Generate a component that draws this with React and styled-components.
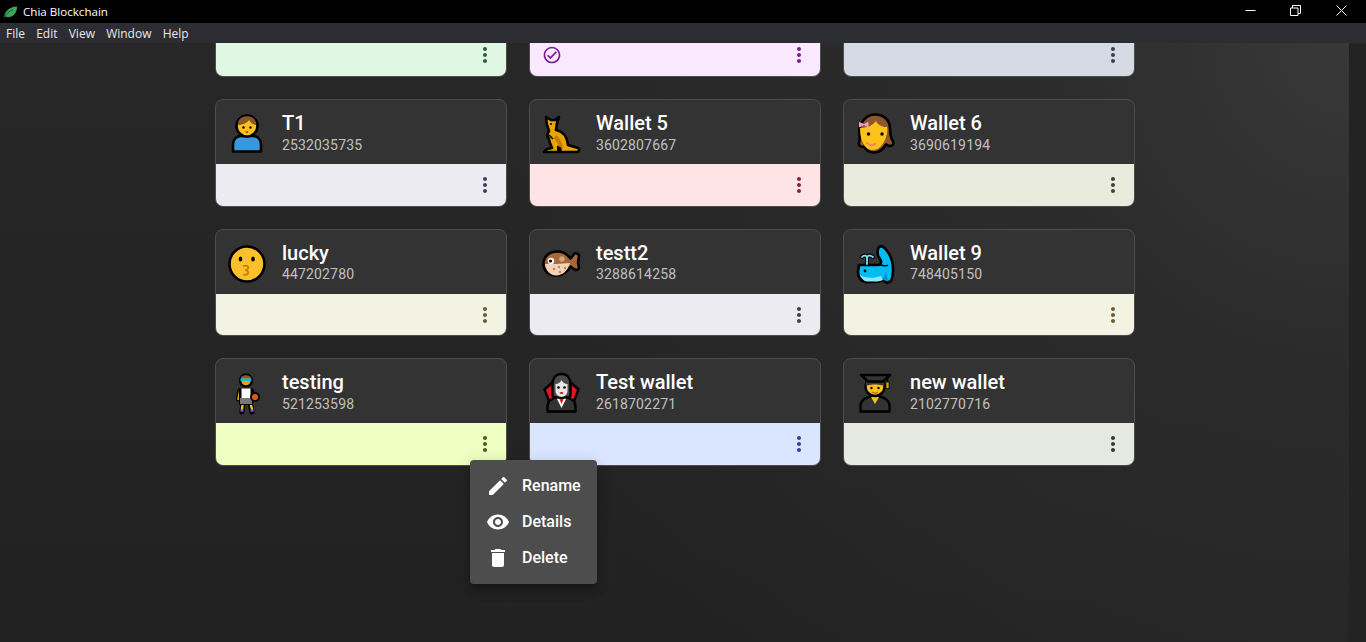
import React from "react";
import styled, { createGlobalStyle } from "styled-components";
import { MdEdit, MdVisibility, MdDelete, MdMoreVert, MdOutlineCheckCircle } from "react-icons/md";

const GlobalStyle = createGlobalStyle`
  html, body { margin: 0; padding: 0; height: 100%; background: #222; overflow: hidden; }
  #root { height: 100%; }
  * { box-sizing: border-box; }
`;

const Ink = "#000";
const Skin = "#fcc21b";

function PersonEmoji() {
  return (
    <svg width="42" height="42" viewBox="0 0 42 42">
      <path d="M7 39.500V32c0-5 4-8 8-8h12c4 0 8 3 8 8v7.500z" fill="#3a96dd" stroke={Ink} strokeWidth="2.600" strokeLinejoin="round" />
      <circle cx="21" cy="14" r="10.500" fill={Skin} stroke={Ink} strokeWidth="2.600" />
      <path d="M11.800 13c0-6 4-8.800 9.200-8.800s9.200 2.800 9.200 8.800c-3 0-6-2-7-5-2 3-7.400 5-11.400 5z" fill="#8e562e" />
      <circle cx="17.500" cy="15.500" r="1.200" fill={Ink} />
      <circle cx="24.500" cy="15.500" r="1.200" fill={Ink} />
      <ellipse cx="21" cy="20" rx="1.400" ry="1.100" fill="#9a5b00" />
    </svg>
  );
}

function KangarooEmoji() {
  return (
    <svg width="42" height="42" viewBox="0 0 42 42">
      <path
        d="M6 5l5 3h4l4-3-2 6-1 7c6 1 11 6 12 15l10 3c2 1 1 4-1 4H4l3-3 5-1c-1-3-3-6-3-9-2-2-2-5 0-8C7 14 6 9 6 5z"
        fill="#eaa300"
        stroke={Ink}
        strokeWidth="2.600"
        strokeLinejoin="round"
      />
      <circle cx="11" cy="12" r="1" fill={Ink} />
      <path d="M15 25c3 2 6 7 6 12" stroke="#c27c00" strokeWidth="4" fill="none" />
      <path d="M17 39.500v-6l4 2 1 4z" fill={Ink} />
      <path d="M9 23l4 4" stroke={Ink} strokeWidth="1.600" />
    </svg>
  );
}

function GirlEmoji() {
  return (
    <svg width="42" height="42" viewBox="0 0 42 42">
      <path
        d="M21 2.500c9 0 15 6 15 14 0 5 .5 9 3 13 1.500 3-2 5.500-5 4l-2-1c-3 5-7 8-12 8-4 0-8-2-10-6-3 1-6-1-5-4 1.500-3 .5-6 .5-9C4 12 12 2.500 21 2.500z"
        fill="#8e562e"
        stroke={Ink}
        strokeWidth="2.600"
        strokeLinejoin="round"
      />
      <path d="M6 16c6 0 12-2 16-7 2 4 6 6 11 6 1 3 0 8-2 13-3 6-7 10-12 10-7 0-13-7-13-22z" fill={Skin} />
      <circle cx="14.500" cy="22" r="1.700" fill={Ink} />
      <circle cx="28" cy="22" r="1.700" fill={Ink} />
      <path d="M13 31c3 2.500 6 2.500 8 1" stroke="#f08a5d" strokeWidth="2.200" fill="none" strokeLinecap="round" />
      <path d="M5.500 10.500l4.500 2-4.500 2.500zM14 10.500L10 12.500l4 2.500z" fill="#f39ac0" stroke="#f39ac0" strokeWidth="1" />
    </svg>
  );
}

function KissEmoji() {
  return (
    <svg width="42" height="42" viewBox="0 0 42 42">
      <circle cx="21" cy="22" r="17.500" fill="#fcc02d" stroke={Ink} strokeWidth="2.600" />
      <ellipse cx="14.500" cy="17" rx="1.800" ry="2.600" fill={Ink} />
      <ellipse cx="27" cy="17" rx="1.800" ry="2.600" fill={Ink} />
      <path d="M17 24c4-1 6 0 5 2.500-.5 1.200-2 1.500-3 1.500 1 0 2.500.5 3 1.800.8 2.400-2 3.500-5 2.700" stroke="#c97f00" strokeWidth="1.800" fill="none" />
    </svg>
  );
}

function FishEmoji() {
  return (
    <svg width="42" height="42" viewBox="0 0 42 42">
      <path
        d="M3.500 22c0-8 6-12.500 14-12.500 6 0 10 3 13 7l4-5c2-1 5 1 4.500 3l-1 6 1 5c0 2-2.500 3-4.500 2l-4-3c-3 5-8 9-14 9-8 0-13-5-13-11.500z"
        fill="#a5663a"
        stroke={Ink}
        strokeWidth="2.600"
        strokeLinejoin="round"
      />
      <path d="M5 22c6 0 16 0 25-1-2 7-7 12.500-14 12.500-6 0-10-5-11-11.500z" fill="#f2d3b8" />
      <circle cx="11" cy="19" r="3.200" fill="#fff" />
      <circle cx="10.500" cy="19" r="1.600" fill={Ink} />
      <circle cx="22" cy="17" r="2.800" fill="#d1a577" />
      <circle cx="14" cy="27" r="1.300" fill="#c08a5a" />
      <circle cx="19" cy="25" r="1.300" fill="#c08a5a" />
      <circle cx="20" cy="30" r="1.300" fill="#c08a5a" />
      <circle cx="25" cy="26" r="1.300" fill="#c08a5a" />
    </svg>
  );
}

function WhaleEmoji() {
  return (
    <svg width="42" height="42" viewBox="0 0 42 42">
      <path
        d="M5 23h19c3 0 4-3 2-6-3-3-3-9-1-12 3-2 6 1 8 4 4 5 6 11 6 18 0 5-1 10-2 12l-4 2-4-3c-2 1-5 2-8 2h-8c-5 0-9-4-9-10z"
        fill="#00bcf2"
        stroke={Ink}
        strokeWidth="2.600"
        strokeLinejoin="round"
      />
      <path d="M13 22v-6M8 15c2-2.500 5-1.500 5 1 0-2.500 3-3.500 6-1" stroke={Ink} strokeWidth="4" fill="none" strokeLinecap="round" />
      <path d="M13 22v-6M8 15c2-2.500 5-1.500 5 1 0-2.500 3-3.500 6-1" stroke="#7ce3ff" strokeWidth="1.800" fill="none" strokeLinecap="round" />
      <circle cx="11" cy="29" r="1.400" fill={Ink} />
      <path d="M6 33c5 3 13 4 21 1l2 4c-3 1-5 1.500-8 1.500h-8c-3 0-5-3-7-6.500z" fill="#8be7ff" />
      <path d="M26 23c3 0 6 2 8 0" stroke={Ink} strokeWidth="1.600" fill="none" />
      <path d="M29 38l3-8 2 9z" fill="#0090c8" />
    </svg>
  );
}

function PlayerEmoji() {
  return (
    <svg width="42" height="42" viewBox="0 0 42 42">
      <g stroke={Ink} strokeWidth="5.200" strokeLinecap="round" fill="none">
        <path d="M14 20l-1.500 8M25.500 20l2 5M17 31l-1 10M24 31l2 10" />
      </g>
      <g stroke="#fcc21b" strokeWidth="2.400" strokeLinecap="round" fill="none">
        <path d="M14 20l-1.500 8M25.500 20l2 5M17 31l-1 7M24 31l2 7" />
      </g>
      <path d="M14.500 39.500h3M24.500 39.500h3" stroke="#7160e8" strokeWidth="2.400" />
      <path d="M14 18.500h12V33H14z" fill="#000" stroke={Ink} strokeWidth="2.200" strokeLinejoin="round" />
      <rect x="15.500" y="17.500" width="9" height="10" fill="#fff" />
      <rect x="14" y="27" width="12" height="6" fill="#7a7574" />
      <circle cx="20" cy="9.500" r="6" fill="#eaa300" stroke={Ink} strokeWidth="2.400" />
      <path d="M14.800 6.500c2-3 8-3 10.400 0v1H14.800z" fill="#8e562e" />
      <rect x="14.500" y="7.500" width="11" height="2.400" fill="#00bcf2" />
      <circle cx="29" cy="26" r="4" fill="#da5a1c" stroke={Ink} strokeWidth="1.800" />
    </svg>
  );
}

function VampireEmoji() {
  return (
    <svg width="42" height="42" viewBox="0 0 42 42">
      <path d="M7.500 40.500V36c0-6 4-10 9-10h10c5 0 9 4 9 10v4.500z" fill="#333" stroke={Ink} strokeWidth="2.400" strokeLinejoin="round" />
      <path d="M16 26h11l-5.500 11z" fill="#fff" />
      <path d="M19 27h5l-2.500 6z" fill="#e81224" />
      <path d="M4.500 18.500L14 10v17l-5 3zM38.500 18.500L29 10v17l5 3z" fill="#e81224" stroke={Ink} strokeWidth="2.400" strokeLinejoin="round" />
      <path d="M12.500 24V13c0-6 3.500-10 9-10s9 4 9 10v11c0 1.500-1.500 2.500-3 2.500h-12c-1.500 0-3-1-3-2.500z" fill="#4a4a4a" stroke={Ink} strokeWidth="2.400" />
      <path d="M15.500 13c3 0 5-2 6-4 1 2 3 4 6 4v7c0 3-3 6-6 6s-6-3-6-6z" fill="#e6e6e6" />
      <circle cx="18.500" cy="16.500" r="1.300" fill={Ink} />
      <circle cx="24.500" cy="16.500" r="1.300" fill={Ink} />
      <ellipse cx="21.500" cy="22" rx="2" ry="1" fill="#e81224" />
    </svg>
  );
}

function GraduateEmoji() {
  return (
    <svg width="42" height="42" viewBox="0 0 42 42">
      <path d="M6.500 40.500V35c0-6 6-10 14.500-10s14.500 4 14.500 10v5.500z" fill="#333" stroke={Ink} strokeWidth="2.400" strokeLinejoin="round" />
      <path d="M17 26l4 7 4-7z" fill="#fcc21b" />
      <circle cx="21" cy="15.500" r="9.500" fill={Skin} stroke={Ink} strokeWidth="2.400" />
      <path d="M11.500 15c0-4 1-6 3-8h13c2 2 3 4 3 8-6-2-13-2-19 0z" fill="#3a3a3a" />
      <path d="M7 4h29l-7 6.500H14z" fill="#333" stroke={Ink} strokeWidth="2.400" strokeLinejoin="round" />
      <circle cx="17.500" cy="17" r="1.200" fill={Ink} />
      <circle cx="24.500" cy="17" r="1.200" fill={Ink} />
      <path d="M18 21c2 1.500 4 1.500 6 0" stroke="#b36b00" strokeWidth="1.200" fill="none" />
      <path d="M33.500 6v9" stroke={Ink} strokeWidth="1.400" />
      <rect x="32" y="11" width="3" height="6.500" fill="#eaa300" stroke={Ink} strokeWidth=".7" />
    </svg>
  );
}

const hiddenRow = [
  { tint: "#e0f7e4", dots: "#2f5d36" },
  { tint: "#fae8ff", dots: "#7a1f8f", verified: true },
  { tint: "#d6dae5", dots: "#3a3f4d" },
];

const wallets = [
  { name: "T1", id: "2532035735", Emoji: PersonEmoji, tint: "#ecebf2", dots: "#3f3f5c" },
  { name: "Wallet 5", id: "3602807667", Emoji: KangarooEmoji, tint: "#ffe4e6", dots: "#8c1d3f" },
  { name: "Wallet 6", id: "3690619194", Emoji: GirlEmoji, tint: "#e9ebdc", dots: "#3f4230" },
  { name: "lucky", id: "447202780", Emoji: KissEmoji, tint: "#f2f3e2", dots: "#6b5a3a" },
  { name: "testt2", id: "3288614258", Emoji: FishEmoji, tint: "#ecebf2", dots: "#3f3f4d" },
  { name: "Wallet 9", id: "748405150", Emoji: WhaleEmoji, tint: "#f2f3e2", dots: "#6b5a3a" },
  { name: "testing", id: "521253598", Emoji: PlayerEmoji, tint: "#efffc4", dots: "#40600f", open: true },
  { name: "Test wallet", id: "2618702271", Emoji: VampireEmoji, tint: "#dae5ff", dots: "#2a3fa8" },
  { name: "new wallet", id: "2102770716", Emoji: GraduateEmoji, tint: "#e5e9e0", dots: "#333830" },
];

function App() {
  return (
    <Shell>
      <GlobalStyle />
      <TitleBar>
        <Brand>
          <svg width="15" height="14" viewBox="0 0 15 14">
            <path d="M1 12.500C2 6 6 2 14 1.500c0 6-3 10-8 10.500-2 .2-3.500-.5-3.500-.5z" fill="#3aa856" />
            <path d="M1 13c2-4 5-7 9-8.500" stroke="#0b3d1b" strokeWidth=".7" fill="none" />
          </svg>
          <span>Chia Blockchain</span>
        </Brand>
        <WindowButtons>
          <WindowButton>
            <svg width="11" height="11" viewBox="0 0 11 11"><path d="M.5 5.500h10" stroke="#fff" /></svg>
          </WindowButton>
          <WindowButton>
            <svg width="11" height="11" viewBox="0 0 11 11" fill="none" stroke="#fff"><path d="M.5 3h7.500v7.500H.5z" /><path d="M2.500 3V.5h8v8H8" /></svg>
          </WindowButton>
          <WindowButton>
            <svg width="11" height="11" viewBox="0 0 11 11"><path d="M.5.500l10 10M10.500.500l-10 10" stroke="#fff" /></svg>
          </WindowButton>
        </WindowButtons>
      </TitleBar>
      <MenuBar>
        {["File", "Edit", "View", "Window", "Help"].map((item) => (
          <MenuLabel key={item}>{item}</MenuLabel>
        ))}
      </MenuBar>
      <Body>
        <ScrollArea>
          <WalletGrid>
            {hiddenRow.map((wallet, i) => (
              <Card key={i}>
                <CardHead />
                <CardFoot $tint={wallet.tint} $dots={wallet.dots}>
                  {wallet.verified ? <MdOutlineCheckCircle size={20} /> : <span />}
                  <MdMoreVert size={24} />
                </CardFoot>
              </Card>
            ))}
            {wallets.map(({ name, id, Emoji, tint, dots, open }) => (
              <Card key={id}>
                <CardHead>
                  <EmojiSlot><Emoji /></EmojiSlot>
                  <WalletText>
                    <WalletName>{name}</WalletName>
                    <WalletId>{id}</WalletId>
                  </WalletText>
                </CardHead>
                <CardFoot $tint={tint} $dots={dots}>
                  <span />
                  <MdMoreVert size={24} />
                </CardFoot>
                {open && (
                  <PopMenu>
                    <PopItem><MdEdit size={24} />Rename</PopItem>
                    <PopItem><MdVisibility size={24} />Details</PopItem>
                    <PopItem><MdDelete size={24} />Delete</PopItem>
                  </PopMenu>
                )}
              </Card>
            ))}
          </WalletGrid>
        </ScrollArea>
        <ScrollTrack />
      </Body>
    </Shell>
  );
}

const Shell = styled.div`
  display: flex;
  flex-direction: column;
  height: 642px;
  overflow: hidden;
  font-family: Roboto, "Liberation Sans", sans-serif;
`;

const TitleBar = styled.div`
  height: 23px;
  background: #000;
  display: flex;
  align-items: center;
  justify-content: space-between;
  flex-shrink: 0;
`;

const Brand = styled.div`
  display: flex;
  align-items: center;
  gap: 5px;
  padding-left: 3px;
  color: #fff;
  font: 11.6px "Open Sans", "Noto Sans", sans-serif;
`;

const WindowButtons = styled.div`
  display: flex;
  padding-right: 2px;
`;

const WindowButton = styled.div`
  width: 45.5px;
  height: 23px;
  display: flex;
  align-items: center;
  justify-content: center;
  padding-bottom: 2px;
`;

const MenuBar = styled.div`
  height: 20px;
  background: #2b2d33;
  display: flex;
  align-items: center;
  gap: 11.2px;
  padding-left: 6px;
  flex-shrink: 0;
`;

const MenuLabel = styled.span`
  color: #e8e8e8;
  font: 12px "Open Sans", "Noto Sans", sans-serif;
`;

const Body = styled.div`
  flex: 1;
  display: flex;
  min-height: 0;
  background: #232323;
`;

const ScrollArea = styled.div`
  flex: 1;
  overflow: hidden;
  padding-left: 1px;
  background:
    radial-gradient(circle at 100% 0, #383838 0, #2b2b2b 22%, rgba(36, 36, 36, 0) 60%),
    linear-gradient(180deg, #272727 0, #222 100%);
`;

const ScrollTrack = styled.div`
  width: 17px;
  flex-shrink: 0;
  background: #232323;
`;

const WalletGrid = styled.div`
  display: grid;
  grid-template-columns: repeat(3, 292px);
  grid-auto-rows: 107.67px;
  gap: 22px;
  width: 920px;
  margin: -73.67px auto 0;
`;

const Card = styled.div`
  position: relative;
  display: flex;
  flex-direction: column;
  background: #333;
  border: 1px solid #4d4d4d;
  border-radius: 8px;
`;

const CardHead = styled.div`
  height: 64px;
  display: flex;
  align-items: center;
  gap: 14px;
  padding-left: 10px;
  flex-shrink: 0;
`;

const EmojiSlot = styled.div`
  width: 42px;
  height: 42px;
  margin-top: 2px;
  flex-shrink: 0;
  svg { display: block; overflow: visible; }
`;

const WalletText = styled.div`
  padding-top: 0.5px;
`;

const WalletName = styled.div`
  color: #fff;
  font-size: 20px;
  font-weight: 500;
  line-height: 24px;
`;

const WalletId = styled.div`
  margin-top: 0.6px;
  color: rgba(255, 255, 255, 0.7);
  font-size: 14px;
  line-height: 18px;
  letter-spacing: 0.15px;
`;

const CardFoot = styled.div`
  flex: 1;
  display: flex;
  align-items: center;
  justify-content: space-between;
  padding: 0.6px 9px 0 12px;
  background: ${(p) => p.$tint};
  color: ${(p) => p.$dots};
  border-radius: 0 0 7px 7px;
`;

const PopMenu = styled.div`
  position: absolute;
  top: calc(100% - 5px);
  left: 254px;
  z-index: 10;
  width: 127px;
  padding: 8px 0;
  background: #4d4d4d;
  border-radius: 4px;
  box-shadow: 0 5px 5px -3px rgba(0, 0, 0, 0.2), 0 8px 10px 1px rgba(0, 0, 0, 0.14), 0 3px 14px 2px rgba(0, 0, 0, 0.12);
`;

const PopItem = styled.div`
  height: 36px;
  display: flex;
  align-items: center;
  gap: 12px;
  padding-left: 16px;
  color: #fff;
  font-size: 16px;
  font-weight: 500;
`;

export default App;
